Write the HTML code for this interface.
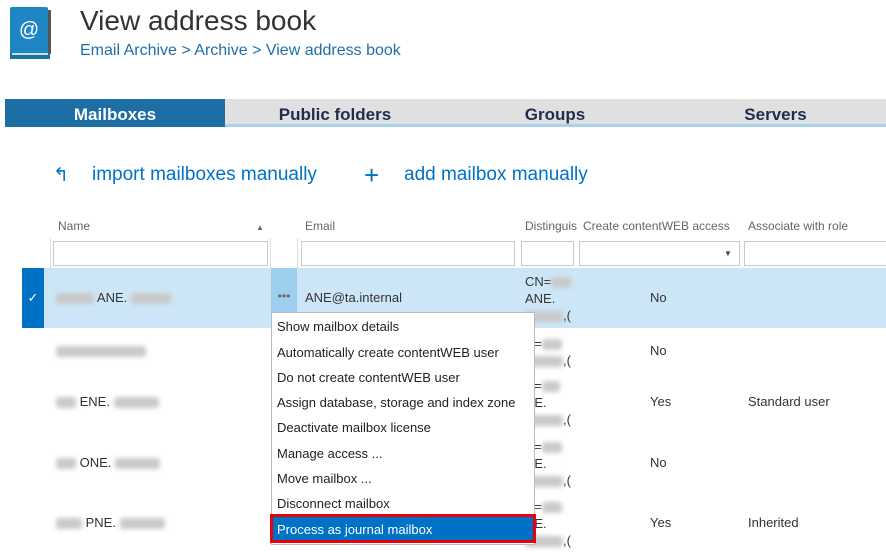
<!DOCTYPE html>
<html><head><meta charset="utf-8"><style>
*{margin:0;padding:0;box-sizing:border-box}
body{width:886px;height:553px;overflow:hidden;background:#fff;font-family:"Liberation Sans",sans-serif;position:relative;color:#333}
.a{position:absolute;white-space:nowrap}
.bl{display:inline-block;background:#c9c9c9;filter:blur(2.5px);height:11px;vertical-align:middle;border-radius:3px}
.tab{position:absolute;top:99px;height:28px;width:220px;text-align:center;font-weight:bold;font-size:17px;line-height:31px;background:#e0e0e0;color:#1f2d4d;border-bottom:3px solid #a9d2ef}
.hd{font-size:12px;color:#666;top:219px}
.in{position:absolute;top:241px;height:25px;border:1px solid #c8c8c8;background:#fff}
.t{font-size:13px;color:#333}
.mi{position:absolute;left:277px;font-size:13px;color:#222}
</style></head><body>
<svg class="a" style="left:10px;top:7px" width="44" height="52"><rect x="0" y="0" width="38" height="48" rx="2" fill="#1f86c4"/><rect x="38" y="3" width="3" height="44" fill="#555"/><rect x="0" y="46" width="40" height="6" fill="#1a6fa3"/><rect x="2" y="46" width="36" height="2" fill="#cde"/><text x="19" y="29" fill="#fff" font-size="20" text-anchor="middle" font-family="Liberation Sans">@</text></svg>
<div class="a" style="left:80px;top:5px;font-size:28px;color:#333;font-weight:300">View address book</div>
<div class="a" style="left:80px;top:42px;font-size:16px;color:#1e6fa8">Email Archive &gt; Archive &gt; View address book</div>
<div class="tab" style="left:5px;background:#1e6ea6;color:#fff;border-bottom:3px solid #1e6ea6">Mailboxes</div>
<div class="tab" style="left:225px">Public folders</div>
<div class="tab" style="left:445px">Groups</div>
<div class="tab" style="left:665px;width:221px">Servers</div>
<div class="a" style="left:53px;top:164px;font-size:19px;color:#0072c6">↰</div>
<div class="a" style="left:92px;top:164px;font-size:19px;color:#0072c6">import mailboxes manually</div>
<div class="a" style="left:364px;top:160px;font-size:26px;color:#0072c6">+</div>
<div class="a" style="left:404px;top:164px;font-size:19px;color:#0072c6">add mailbox manually</div>
<div class="a hd" style="left:58px">Name</div>
<div class="a" style="left:256px;top:223px;font-size:8px;color:#666">▲</div>
<div class="a hd" style="left:305px">Email</div>
<div class="a hd" style="left:525px">Distinguis</div>
<div class="a hd" style="left:583px">Create contentWEB access</div>
<div class="a hd" style="left:748px">Associate with role</div>
<div class="a" style="left:50px;top:238px;width:1px;height:30px;background:#ddd"></div>
<div class="a" style="left:270px;top:238px;width:1px;height:30px;background:#ddd"></div>
<div class="a" style="left:297px;top:238px;width:1px;height:30px;background:#ddd"></div>
<div class="in" style="left:53px;width:215px"></div>
<div class="in" style="left:301px;width:214px"></div>
<div class="in" style="left:521px;width:53px"></div>
<div class="in" style="left:579px;width:161px"></div>
<div class="a" style="left:724px;top:249px;font-size:8px;color:#444">▼</div>
<div class="in" style="left:744px;width:150px"></div>
<div class="a" style="left:22px;top:268px;width:864px;height:60px;background:#cde6f7"></div>
<div class="a" style="left:22px;top:268px;width:22px;height:60px;background:#0072c6;color:#fff;font-size:13px;line-height:60px;text-align:center">✓</div>
<div class="a" style="left:271px;top:268px;width:26px;height:60px;background:#9fcfef;color:#666;font-size:12px;text-align:center;line-height:56px">•••</div>
<div class="a t" style="left:56px;top:290px"><span class="bl" style="width:38px"></span> ANE. <span class="bl" style="width:40px"></span></div>
<div class="a t" style="left:305px;top:290px">ANE@ta.internal</div>
<div class="a t" style="left:525px;top:273px;line-height:17px">CN=<span class="bl" style="width:20px"></span><br>ANE.<br><span class="bl" style="width:38px"></span>,(</div>
<div class="a t" style="left:650px;top:290px">No</div>
<div class="a t" style="left:56px;top:343px"><span class="bl" style="width:90px"></span></div>
<div class="a t" style="left:525px;top:335px;line-height:17px">N=<span class="bl" style="width:20px"></span><br><span class="bl" style="width:38px"></span>,(</div>
<div class="a t" style="left:650px;top:343px">No</div>
<div class="a t" style="left:56px;top:394px"><span class="bl" style="width:20px"></span> ENE. <span class="bl" style="width:45px"></span></div>
<div class="a t" style="left:525px;top:377px;line-height:17px">N=<span class="bl" style="width:18px"></span><br>NE.<br><span class="bl" style="width:38px"></span>,(</div>
<div class="a t" style="left:650px;top:394px">Yes</div>
<div class="a t" style="left:748px;top:394px">Standard user</div>
<div class="a t" style="left:56px;top:455px"><span class="bl" style="width:20px"></span> ONE. <span class="bl" style="width:45px"></span></div>
<div class="a t" style="left:525px;top:438px;line-height:17px">N=<span class="bl" style="width:20px"></span><br>NE.<br><span class="bl" style="width:38px"></span>,(</div>
<div class="a t" style="left:650px;top:455px">No</div>
<div class="a t" style="left:56px;top:515px"><span class="bl" style="width:26px"></span> PNE. <span class="bl" style="width:45px"></span></div>
<div class="a t" style="left:525px;top:498px;line-height:17px">N=<span class="bl" style="width:20px"></span><br>NE.<br><span class="bl" style="width:38px"></span>,(</div>
<div class="a t" style="left:650px;top:515px">Yes</div>
<div class="a t" style="left:748px;top:515px">Inherited</div>
<div class="a" style="left:271px;top:312px;width:264px;height:233px;background:#fff;border:1px solid #bbb"></div>
<div class="mi" style="top:319px">Show mailbox details</div>
<div class="mi" style="top:345px">Automatically create contentWEB user</div>
<div class="mi" style="top:370px">Do not create contentWEB user</div>
<div class="mi" style="top:395px">Assign database, storage and index zone</div>
<div class="mi" style="top:420px">Deactivate mailbox license</div>
<div class="mi" style="top:446px">Manage access ...</div>
<div class="mi" style="top:471px">Move mailbox ...</div>
<div class="mi" style="top:496px">Disconnect mailbox</div>
<div class="a" style="left:270px;top:514px;width:266px;height:29px;background:#0072c6;border:3px solid #e8000b"></div>
<div class="mi" style="top:522px;color:#fff">Process as journal mailbox</div>
</body></html>
